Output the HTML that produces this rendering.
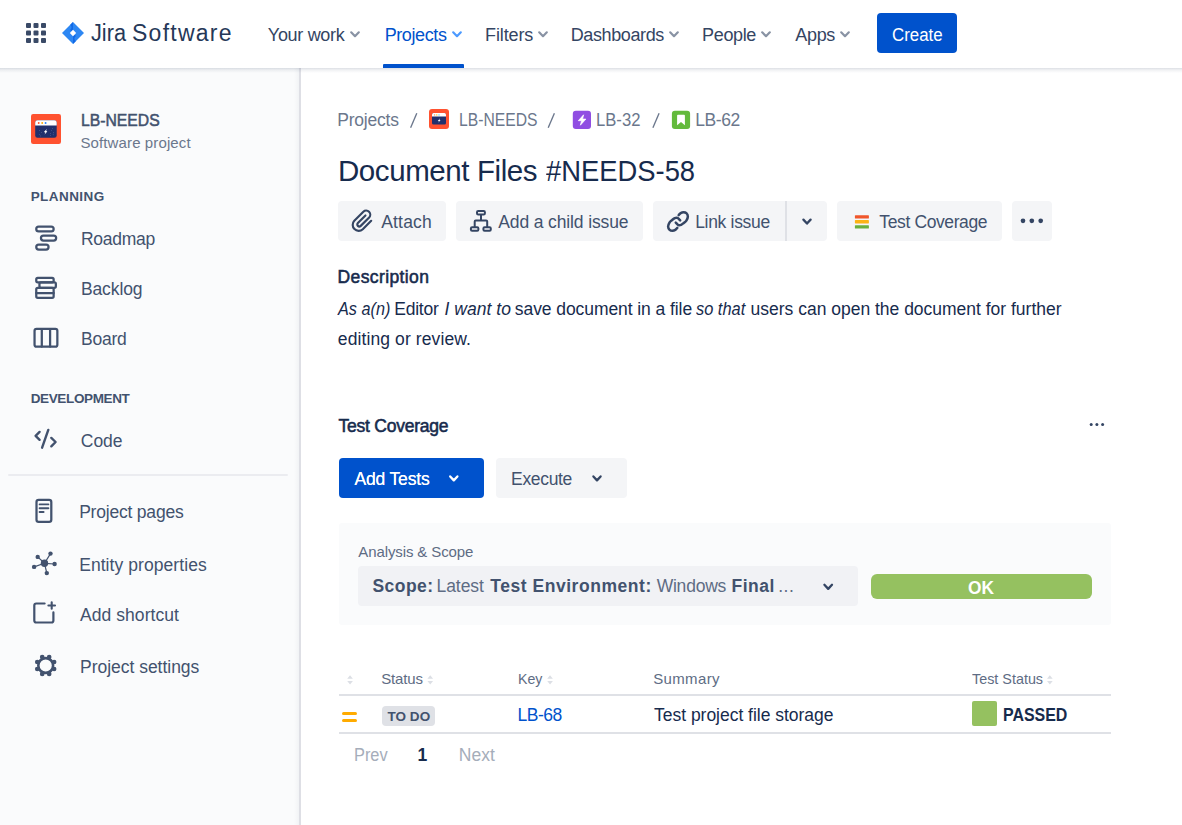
<!DOCTYPE html>
<html><head><meta charset="utf-8"><title>Document Files #NEEDS-58 - Jira</title>
<style>
html,body{margin:0;padding:0}
body{width:1182px;height:825px;overflow:hidden;background:#fff;font-family:"Liberation Sans", sans-serif;position:relative}
.t{position:absolute;white-space:nowrap;line-height:40px;height:40px}
.a{position:absolute}
svg{position:absolute;overflow:visible}
</style></head>
<body>
<!-- sidebar -->
<div class="a" style="left:0;top:68px;width:300px;height:757px;background:#FAFBFC"></div>
<div class="a" style="left:294px;top:68px;width:5px;height:757px;background:linear-gradient(to right,rgba(9,30,66,0),rgba(9,30,66,0.035))"></div>
<div class="a" style="left:299px;top:68px;width:2px;height:757px;background:#DEDFE5"></div>
<!-- top nav -->
<div class="a" style="left:0;top:68px;width:1182px;height:5px;background:linear-gradient(to bottom,rgba(9,30,66,0.14),rgba(9,30,66,0.06) 40%,rgba(9,30,66,0))"></div>
<div class="a" style="left:0;top:0;width:1182px;height:68px;background:#fff"></div>
<!-- app switcher -->
<svg style="left:26px;top:23px" width="20" height="20" viewBox="0 0 20 20" fill="#3A4A67">
<rect x="0" y="0" width="5" height="5" rx="1"/><rect x="7.5" y="0" width="5" height="5" rx="1"/><rect x="15" y="0" width="5" height="5" rx="1"/>
<rect x="0" y="7.5" width="5" height="5" rx="1"/><rect x="7.5" y="7.5" width="5" height="5" rx="1"/><rect x="15" y="7.5" width="5" height="5" rx="1"/>
<rect x="0" y="15" width="5" height="5" rx="1"/><rect x="7.5" y="15" width="5" height="5" rx="1"/><rect x="15" y="15" width="5" height="5" rx="1"/>
</svg>
<!-- jira logo -->
<svg style="left:62.2px;top:22px" width="22" height="22" viewBox="0 0 22 22">
<defs><linearGradient id="jg1" x1="0.2" y1="0" x2="0.6" y2="0.6"><stop offset="0" stop-color="#0A5FE0"/><stop offset="1" stop-color="#2684FF"/></linearGradient>
<linearGradient id="jg2" x1="0.8" y1="1" x2="0.4" y2="0.4"><stop offset="0" stop-color="#0A5FE0"/><stop offset="1" stop-color="#2684FF"/></linearGradient></defs>
<path d="M11 0 L22 11 L11 22 L0 11 Z" fill="#2D87F3"/>
<path d="M11 0 L8.2 2.8 C10 4.8 10 6.4 8 8 L11 11 L11 8 Z" fill="#0F66E4" opacity="0.9"/>
<path d="M11 22 L13.8 19.2 C12 17.2 12 15.6 14 14 L11 11 L11 14 Z" fill="#0F66E4" opacity="0.9"/>
<path d="M11 7.8 L14.2 11 L11 14.2 L7.8 11 Z" fill="#fff"/>
</svg>
<!-- nav chevrons -->
<svg style="left:350px;top:30.5px" width="10" height="7" viewBox="0 0 10 7" fill="none" stroke="#8993A4" stroke-width="2.2" stroke-linecap="round" stroke-linejoin="round"><path d="M1.2 1.3 L5 5.2 L8.8 1.3"/></svg>
<svg style="left:451.5px;top:30.5px" width="10" height="7" viewBox="0 0 10 7" fill="none" stroke="#4C9AFF" stroke-width="2.2" stroke-linecap="round" stroke-linejoin="round"><path d="M1.2 1.3 L5 5.2 L8.8 1.3"/></svg>
<svg style="left:538px;top:30.5px" width="10" height="7" viewBox="0 0 10 7" fill="none" stroke="#8993A4" stroke-width="2.2" stroke-linecap="round" stroke-linejoin="round"><path d="M1.2 1.3 L5 5.2 L8.8 1.3"/></svg>
<svg style="left:669px;top:30.5px" width="10" height="7" viewBox="0 0 10 7" fill="none" stroke="#8993A4" stroke-width="2.2" stroke-linecap="round" stroke-linejoin="round"><path d="M1.2 1.3 L5 5.2 L8.8 1.3"/></svg>
<svg style="left:761px;top:30.5px" width="10" height="7" viewBox="0 0 10 7" fill="none" stroke="#8993A4" stroke-width="2.2" stroke-linecap="round" stroke-linejoin="round"><path d="M1.2 1.3 L5 5.2 L8.8 1.3"/></svg>
<svg style="left:840px;top:30.5px" width="10" height="7" viewBox="0 0 10 7" fill="none" stroke="#8993A4" stroke-width="2.2" stroke-linecap="round" stroke-linejoin="round"><path d="M1.2 1.3 L5 5.2 L8.8 1.3"/></svg>
<!-- active underline -->
<div class="a" style="left:383px;top:64px;width:81px;height:4px;background:#0052CC;border-radius:1px 1px 0 0"></div>
<!-- create button -->
<div class="a" style="left:877px;top:13px;width:80px;height:40px;background:#0052CC;border-radius:4px"></div>
<!-- project avatar -->
<div class="a" style="left:31px;top:114px;width:30px;height:30px;background:#FF5230;border-radius:2.2px"></div>
<!-- sidebar divider -->
<div class="a" style="left:8px;top:474px;width:280px;height:2px;background:#EBECF0;border-radius:1px"></div>
<!-- action buttons -->
<div class="a" style="left:338px;top:201px;width:108px;height:40px;background:#F4F5F7;border-radius:4px"></div>
<div class="a" style="left:456px;top:201px;width:187px;height:40px;background:#F4F5F7;border-radius:4px"></div>
<div class="a" style="left:653px;top:201px;width:132.5px;height:40px;background:#F4F5F7;border-radius:4px 0 0 4px"></div>
<div class="a" style="left:785px;top:201px;width:2px;height:40px;background:#DFE1E6"></div>
<div class="a" style="left:787px;top:201px;width:39.5px;height:40px;background:#F4F5F7;border-radius:0 4px 4px 0"></div>
<div class="a" style="left:837px;top:201px;width:165px;height:40px;background:#F4F5F7;border-radius:4px"></div>
<div class="a" style="left:1012px;top:201px;width:40px;height:40px;background:#F4F5F7;border-radius:4px"></div>
<!-- Add Tests / Execute -->
<div class="a" style="left:339px;top:458px;width:145px;height:40px;background:#0052CC;border-radius:4px"></div>
<div class="a" style="left:496px;top:458px;width:131px;height:40px;background:#F4F5F7;border-radius:4px"></div>
<!-- panel -->
<div class="a" style="left:339px;top:523px;width:772px;height:102px;background:#FAFBFC;border-radius:3px"></div>
<div class="a" style="left:358px;top:566px;width:500px;height:40px;background:#F1F2F5;border-radius:4px"></div>
<div class="a" style="left:871px;top:574px;width:221px;height:25px;background:#95C160;border-radius:6px"></div>
<!-- table lines -->
<div class="a" style="left:339px;top:694px;width:772px;height:2px;background:#DFE1E6"></div>
<div class="a" style="left:339px;top:732px;width:772px;height:2px;background:#DFE1E6"></div>
<!-- todo lozenge -->
<div class="a" style="left:382px;top:706px;width:53px;height:20px;background:#DFE1E6;border-radius:4px"></div>
<!-- passed square -->
<div class="a" style="left:972px;top:701px;width:25px;height:25px;background:#95C160;border-radius:2px"></div>
<!-- priority medium -->
<div class="a" style="left:341.5px;top:712.3px;width:15px;height:3.1px;background:#FFAB00;border-radius:1.5px"></div>
<div class="a" style="left:341.5px;top:718.8px;width:15px;height:3.1px;background:#FFAB00;border-radius:1.5px"></div>
<svg style="left:0;top:0" width="1182" height="825" viewBox="0 0 1182 825">
<g fill="none" stroke="#42526E" stroke-width="2.25" stroke-linecap="round" stroke-linejoin="round">
<rect x="36.25" y="226.55" width="17.40" height="4.90" rx="2.45"/>
<rect x="40.95" y="235.55" width="15.20" height="5.00" rx="2.50"/>
<rect x="36.25" y="244.55" width="12.30" height="5.00" rx="2.50"/>
<rect x="36.25" y="277.95" width="17.40" height="4.40" rx="1.50"/>
<rect x="39.45" y="282.35" width="16.40" height="5.50" rx="1.50"/>
<rect x="36.25" y="287.85" width="17.40" height="10.00" rx="1.50"/>
<path d="M36.2 293.1 H53.7"/>
<rect x="34.55" y="328.75" width="22.80" height="17.90" rx="2.00"/>
<path d="M41.8 329 V346.6 M50.1 329 V346.6"/>
<rect x="36.50" y="499.80" width="14.80" height="22.10" rx="2.20"/>
<path d="M39.6 504.4 H48.4 M39.6 508.2 H48.4 M39.6 512 H43.6" stroke-width="1.9"/>
<path d="M44.6 603.5 H36.3 a2 2 0 0 0 -2 2 V620.5 a2 2 0 0 0 2 2 H51.4 a2 2 0 0 0 2 -2 V612.4" stroke-width="2.2"/>
<path d="M51.7 602.2 V608.8 M48.4 605.5 H55" stroke-width="2.1"/>
</g>
<g fill="none" stroke="#42526E" stroke-width="2.4" stroke-linecap="round" stroke-linejoin="round">
<path d="M39.6 431.9 L35.6 435.8 L39.6 439.8 M48.3 429.9 L42.1 447.7 M51.3 437.9 L55.6 442 L51.3 446.3"/>
</g>
<g fill="#42526E" stroke="#42526E" stroke-width="1.2">
<path d="M44.5 563.3 L37.7 556.9"/>
<path d="M44.5 563.3 L50.5 553.6"/>
<path d="M44.5 563.3 L54.6 564.0"/>
<path d="M44.5 563.3 L46.8 573.1"/>
<path d="M44.5 563.3 L34.1 566.9"/>
<circle cx="44.5" cy="563.3" r="3.7" stroke="none"/>
<circle cx="37.7" cy="556.9" r="2.2" stroke="none"/>
<circle cx="50.5" cy="553.6" r="2.2" stroke="none"/>
<circle cx="54.6" cy="564.0" r="2.2" stroke="none"/>
<circle cx="46.8" cy="573.1" r="2.2" stroke="none"/>
<circle cx="34.1" cy="566.9" r="2.2" stroke="none"/>
</g>
<g fill="#42526E">
<circle cx="45.7" cy="665.5" r="7.4" fill="none" stroke="#42526E" stroke-width="2.6"/>
<circle cx="54.11" cy="668.98" r="2.35"/>
<circle cx="49.18" cy="673.91" r="2.35"/>
<circle cx="42.22" cy="673.91" r="2.35"/>
<circle cx="37.29" cy="668.98" r="2.35"/>
<circle cx="37.29" cy="662.02" r="2.35"/>
<circle cx="42.22" cy="657.09" r="2.35"/>
<circle cx="49.18" cy="657.09" r="2.35"/>
<circle cx="54.11" cy="662.02" r="2.35"/>
</g>
<path d="M371.20 220.79 L362.78 229.20 A6 6 0 0 1 354.30 220.72 L363.35 211.67 A4.1 4.1 0 0 1 369.15 217.46 L360.73 225.88 A2 2 0 0 1 357.90 223.05 L365.47 215.48" fill="none" stroke="#344563" stroke-width="2.15" stroke-linecap="round" stroke-linejoin="round"/>
<g fill="none" stroke="#344563" stroke-width="2" stroke-linecap="round" stroke-linejoin="round">
<rect x="477.00" y="211.10" width="7.90" height="3.30" rx="1.20"/>
<rect x="470.90" y="227.30" width="7.50" height="3.50" rx="1.20"/>
<rect x="483.40" y="227.30" width="7.40" height="3.50" rx="1.20"/>
<path d="M481 215 V220.4 M474.7 226.4 V221.4 a1 1 0 0 1 1 -1 H486.2 a1 1 0 0 1 1 1 V226.4"/>
</g>
<g fill="none" stroke="#344563" stroke-width="2.5" stroke-linecap="round" stroke-linejoin="round">
<path d="M677.30 227.90 C676.97 228.23 676.10 229.42 675.30 229.90 C674.50 230.38 673.45 230.82 672.50 230.80 C671.55 230.78 670.33 230.50 669.60 229.80 C668.87 229.10 668.10 227.83 668.10 226.60 C668.10 225.37 668.92 223.50 669.60 222.40 C670.28 221.30 671.33 220.72 672.20 220.00 C673.07 219.28 673.92 218.45 674.80 218.10 C675.68 217.75 676.60 217.52 677.50 217.90 C678.40 218.28 679.75 219.98 680.20 220.40"/>
<path d="M677.30 227.90 C676.97 228.23 676.10 229.42 675.30 229.90 C674.50 230.38 673.45 230.82 672.50 230.80 C671.55 230.78 670.33 230.50 669.60 229.80 C668.87 229.10 668.10 227.83 668.10 226.60 C668.10 225.37 668.92 223.50 669.60 222.40 C670.28 221.30 671.33 220.72 672.20 220.00 C673.07 219.28 673.92 218.45 674.80 218.10 C675.68 217.75 676.60 217.52 677.50 217.90 C678.40 218.28 679.75 219.98 680.20 220.40" transform="rotate(180 677.98 221.49)"/>
</g>
<path d="M803.40 219.65 L807.00 223.55 L810.60 219.65" fill="none" stroke="#344563" stroke-width="2.3" stroke-linecap="round" stroke-linejoin="round"/>
<path d="M450.20 476.45 L453.80 480.35 L457.40 476.45" fill="none" stroke="#FFFFFF" stroke-width="2.3" stroke-linecap="round" stroke-linejoin="round"/>
<path d="M593.40 476.45 L597.00 480.35 L600.60 476.45" fill="none" stroke="#344563" stroke-width="2.3" stroke-linecap="round" stroke-linejoin="round"/>
<path d="M824.40 584.75 L828.20 588.85 L832.00 584.75" fill="none" stroke="#344563" stroke-width="2.3" stroke-linecap="round" stroke-linejoin="round"/>
<rect x="854.9" y="215.2" width="14" height="3.3" rx="0.6" fill="#F0562B"/>
<rect x="854.9" y="220.1" width="14" height="3.3" rx="0.6" fill="#FBB315"/>
<rect x="854.9" y="225.2" width="14" height="3.3" rx="0.6" fill="#6AAF3D"/>
<circle cx="1023.0" cy="220.8" r="2.35" fill="#344563"/>
<circle cx="1031.8" cy="220.8" r="2.35" fill="#344563"/>
<circle cx="1040.7" cy="220.8" r="2.35" fill="#344563"/>
<circle cx="1091.2" cy="424.6" r="1.5" fill="#344563"/>
<circle cx="1096.9" cy="424.6" r="1.5" fill="#344563"/>
<circle cx="1102.6" cy="424.6" r="1.5" fill="#344563"/>
<rect x="429" y="109" width="20" height="20" rx="3" fill="#FF5230"/>
<rect x="432" y="113" width="14" height="11.4" rx="1.5" fill="#21306C"/>
<path d="M432 116.5 V114.5 a1.5 1.5 0 0 1 1.5 -1.5 H444.5 a1.5 1.5 0 0 1 1.5 1.5 V116.5 Z" fill="#fff"/>
<circle cx="434.6" cy="114.9" r="0.7" fill="#FF8B5C"/><circle cx="436.8" cy="114.9" r="0.7" fill="#FFC400"/><circle cx="439" cy="114.9" r="0.7" fill="#4FC3F7"/>
<path d="M440 118.3 L437.8 121 L439 121 L438.2 122.8 L440.6 120 L439.4 120 Z" fill="#fff"/>
<rect x="572.8" y="110.8" width="18.2" height="18.2" rx="3" fill="#904EE2"/>
<path d="M583.6 114.8 L578.3 120.7 L581.5 120.7 L580.4 125.2 L585.9 119.1 L582.6 119.1 Z" fill="#fff" stroke="#fff" stroke-width="0.7" stroke-linejoin="round"/>
<rect x="671.9" y="110.8" width="18.2" height="18.2" rx="3" fill="#63BA3C"/>
<path d="M677.1 115.6 a0.9 0.9 0 0 1 0.9 -0.9 H684.0 a0.9 0.9 0 0 1 0.9 0.9 V125.2 L681 122.0 L677.1 125.2 Z" fill="#fff"/>
<rect x="35.2" y="120.2" width="21.5" height="17.5" rx="2.3" fill="#21306C"/>
<path d="M35.2 125.6 V122.5 a2.3 2.3 0 0 1 2.3 -2.3 H54.4 a2.3 2.3 0 0 1 2.3 2.3 V125.6 Z" fill="#fff"/>
<circle cx="38.7" cy="123" r="0.95" fill="#FF5230"/><circle cx="42.2" cy="123" r="0.95" fill="#FFAB00"/><circle cx="45.6" cy="123" r="0.95" fill="#2684FF"/>
<path d="M46.9 129 L43.9 132 L45.4 132.4 L44.6 134.4 L47.3 131.4 L46.1 131 Z" fill="#fff"/>
<circle cx="39.5" cy="130.5" r="0.45" fill="#8C98C4" opacity="0.7"/>
<circle cx="41.5" cy="132.6" r="0.45" fill="#8C98C4" opacity="0.7"/>
<circle cx="39.3" cy="134.6" r="0.45" fill="#8C98C4" opacity="0.7"/>
<circle cx="52.4" cy="128.6" r="0.45" fill="#8C98C4" opacity="0.7"/>
<circle cx="51.5" cy="130.6" r="0.45" fill="#8C98C4" opacity="0.7"/>
<circle cx="53.4" cy="132.8" r="0.45" fill="#8C98C4" opacity="0.7"/>
<circle cx="50.4" cy="133.4" r="0.45" fill="#8C98C4" opacity="0.7"/>
<circle cx="53.2" cy="134.8" r="0.45" fill="#8C98C4" opacity="0.7"/>
<circle cx="50.6" cy="135.6" r="0.45" fill="#8C98C4" opacity="0.7"/>
<circle cx="40.6" cy="135.9" r="0.45" fill="#8C98C4" opacity="0.7"/>
<path d="M410.6 127.8 L416.8 113.2" stroke="#6B778C" stroke-width="1.35" fill="none"/>
<path d="M548.2 127.8 L554.4 113.2" stroke="#6B778C" stroke-width="1.35" fill="none"/>
<path d="M652.9 127.8 L659.1 113.2" stroke="#6B778C" stroke-width="1.35" fill="none"/>
<path d="M347.2 678.7 l2.85 -3.5 l2.85 3.5 Z M347.2 680.9 l2.85 3.5 l2.85 -3.5 Z" fill="#DCDFE5"/>
<path d="M427.4 678.7 l2.85 -3.5 l2.85 3.5 Z M427.4 680.9 l2.85 3.5 l2.85 -3.5 Z" fill="#DCDFE5"/>
<path d="M547.2 678.7 l2.85 -3.5 l2.85 3.5 Z M547.2 680.9 l2.85 3.5 l2.85 -3.5 Z" fill="#DCDFE5"/>
<path d="M1047.0 678.7 l2.85 -3.5 l2.85 3.5 Z M1047.0 680.9 l2.85 3.5 l2.85 -3.5 Z" fill="#DCDFE5"/>
</svg>
<div id="logo1" class="t" style="left:91.20px;top:13.00px;font-size:23px;font-weight:400;color:#253858;transform:scaleX(0.9444);transform-origin:0 50%;">Jira</div>
<div id="logo2" class="t" style="left:132.04px;top:13.00px;font-size:23px;font-weight:400;color:#253858;letter-spacing:1.243px;">Software</div>
<div id="n1" class="t" style="left:267.86px;top:15.00px;font-size:18px;font-weight:400;color:#344563;letter-spacing:-0.309px;">Your work</div>
<div id="n2" class="t" style="left:384.68px;top:15.00px;font-size:18px;font-weight:400;color:#0052CC;letter-spacing:-0.402px;">Projects</div>
<div id="n3" class="t" style="left:485.11px;top:15.00px;font-size:18px;font-weight:400;color:#344563;letter-spacing:-0.126px;">Filters</div>
<div id="n4" class="t" style="left:570.70px;top:15.00px;font-size:18px;font-weight:400;color:#344563;letter-spacing:-0.379px;">Dashboards</div>
<div id="n5" class="t" style="left:702.10px;top:15.00px;font-size:18px;font-weight:400;color:#344563;letter-spacing:-0.355px;">People</div>
<div id="n6" class="t" style="left:795.28px;top:15.00px;font-size:18px;font-weight:400;color:#344563;letter-spacing:-0.310px;">Apps</div>
<div id="create" class="t" style="left:892.15px;top:15.00px;font-size:18px;font-weight:400;color:#FFFFFF;transform:scaleX(0.9377);transform-origin:0 50%;">Create</div>
<div id="pj" class="t" style="left:80.58px;top:100.00px;font-size:17.3px;font-weight:400;color:#42526E;-webkit-text-stroke:0.55px #42526E;transform:scaleX(0.9100);transform-origin:0 50%;">LB-NEEDS</div>
<div id="pjs" class="t" style="left:80.47px;top:123.00px;font-size:15px;font-weight:400;color:#6B778C;letter-spacing:0.116px;">Software project</div>
<div id="h1" class="t" style="left:30.68px;top:177.00px;font-size:13.5px;font-weight:700;color:#42526E;letter-spacing:0.435px;">PLANNING</div>
<div id="s1" class="t" style="left:80.91px;top:219.00px;font-size:17.5px;font-weight:400;color:#42526E;letter-spacing:-0.269px;">Roadmap</div>
<div id="s2" class="t" style="left:80.93px;top:269.00px;font-size:17.5px;font-weight:400;color:#42526E;letter-spacing:-0.102px;">Backlog</div>
<div id="s3" class="t" style="left:80.98px;top:319.00px;font-size:17.5px;font-weight:400;color:#42526E;letter-spacing:-0.223px;">Board</div>
<div id="h2" class="t" style="left:30.69px;top:379.00px;font-size:13.5px;font-weight:700;color:#42526E;letter-spacing:-0.363px;">DEVELOPMENT</div>
<div id="s4" class="t" style="left:80.78px;top:421.00px;font-size:17.5px;font-weight:400;color:#42526E;letter-spacing:-0.013px;">Code</div>
<div id="s5" class="t" style="left:79.15px;top:492.00px;font-size:17.5px;font-weight:400;color:#42526E;letter-spacing:-0.204px;">Project pages</div>
<div id="s6" class="t" style="left:79.15px;top:545.00px;font-size:17.5px;font-weight:400;color:#42526E;letter-spacing:0.069px;">Entity properties</div>
<div id="s7" class="t" style="left:80.00px;top:595.00px;font-size:17.5px;font-weight:400;color:#42526E;letter-spacing:0.064px;">Add shortcut</div>
<div id="s8" class="t" style="left:80.02px;top:647.00px;font-size:17.5px;font-weight:400;color:#42526E;letter-spacing:-0.024px;">Project settings</div>
<div id="b1" class="t" style="left:337.25px;top:100.00px;font-size:17.5px;font-weight:400;color:#6B778C;letter-spacing:-0.218px;">Projects</div>
<div id="b2" class="t" style="left:458.98px;top:100.00px;font-size:17.5px;font-weight:400;color:#6B778C;transform:scaleX(0.8974);transform-origin:0 50%;">LB-NEEDS</div>
<div id="b3" class="t" style="left:596.02px;top:100.00px;font-size:17.5px;font-weight:400;color:#6B778C;transform:scaleX(0.9515);transform-origin:0 50%;">LB-32</div>
<div id="b4" class="t" style="left:695.15px;top:100.00px;font-size:17.5px;font-weight:400;color:#6B778C;letter-spacing:-0.375px;">LB-62</div>
<div id="title1" class="t" style="left:337.92px;top:151.00px;font-size:29.5px;font-weight:400;color:#172B4D;letter-spacing:-0.401px;">Document Files</div>
<div id="title2" class="t" style="left:545.71px;top:151.00px;font-size:29.5px;font-weight:400;color:#172B4D;transform:scaleX(0.9279);transform-origin:0 50%;">#NEEDS-58</div>
<div id="bt1" class="t" style="left:381.19px;top:202.00px;font-size:17.5px;font-weight:400;color:#42526E;letter-spacing:0.197px;">Attach</div>
<div id="bt2" class="t" style="left:498.28px;top:202.00px;font-size:17.5px;font-weight:400;color:#42526E;letter-spacing:-0.129px;">Add a child issue</div>
<div id="bt3" class="t" style="left:695.15px;top:202.00px;font-size:17.5px;font-weight:400;color:#42526E;letter-spacing:-0.306px;">Link issue</div>
<div id="bt4" class="t" style="left:879.37px;top:202.00px;font-size:17.5px;font-weight:400;color:#42526E;letter-spacing:-0.388px;">Test Coverage</div>
<div id="dh" class="t" style="left:337.54px;top:257.00px;font-size:17.5px;font-weight:400;color:#172B4D;letter-spacing:0.384px;-webkit-text-stroke:0.55px #172B4D;">Description</div>
<div id="d1a" class="t" style="left:338.05px;top:289.00px;font-size:17.5px;font-weight:400;color:#172B4D;transform:scaleX(0.9273);transform-origin:0 50%;"><i>As a(n)</i></div>
<div id="d1b" class="t" style="left:394.25px;top:289.00px;font-size:17.5px;font-weight:400;color:#172B4D;letter-spacing:-0.223px;">Editor</div>
<div id="d1c" class="t" style="left:444.49px;top:289.00px;font-size:17.5px;font-weight:400;color:#172B4D;letter-spacing:0.035px;"><i>I want to</i></div>
<div id="d1d" class="t" style="left:514.85px;top:289.00px;font-size:17.5px;font-weight:400;color:#172B4D;letter-spacing:-0.078px;">save document in a file</div>
<div id="d1e" class="t" style="left:696.03px;top:289.00px;font-size:17.5px;font-weight:400;color:#172B4D;transform:scaleX(0.9366);transform-origin:0 50%;"><i>so that</i></div>
<div id="d1f" class="t" style="left:750.61px;top:289.00px;font-size:17.5px;font-weight:400;color:#172B4D;letter-spacing:-0.010px;">users can open the document for further</div>
<div id="d2" class="t" style="left:337.81px;top:319.00px;font-size:17.5px;font-weight:400;color:#172B4D;letter-spacing:0.105px;">editing or review.</div>
<div id="tc" class="t" style="left:338.62px;top:406.00px;font-size:17.5px;font-weight:400;color:#172B4D;letter-spacing:-0.253px;-webkit-text-stroke:0.55px #172B4D;">Test Coverage</div>
<div id="at" class="t" style="left:354.51px;top:459.00px;font-size:17.5px;font-weight:400;color:#FFFFFF;letter-spacing:-0.167px;text-shadow:0 0 0.4px #fff;">Add Tests</div>
<div id="ex" class="t" style="left:511.07px;top:459.00px;font-size:17.5px;font-weight:400;color:#42526E;letter-spacing:-0.334px;">Execute</div>
<div id="as" class="t" style="left:358.30px;top:532.00px;font-size:15px;font-weight:400;color:#5E6C84;letter-spacing:-0.108px;">Analysis &amp; Scope</div>
<div id="sel1" class="t" style="left:372.53px;top:566.00px;font-size:17.5px;font-weight:700;color:#42526E;letter-spacing:0.425px;">Scope:</div>
<div id="sel2" class="t" style="left:436.45px;top:566.00px;font-size:17.5px;font-weight:400;color:#5E6C84;letter-spacing:-0.034px;">Latest</div>
<div id="sel3" class="t" style="left:490.19px;top:566.00px;font-size:17.5px;font-weight:700;color:#42526E;letter-spacing:0.548px;">Test Environment:</div>
<div id="sel4" class="t" style="left:656.66px;top:566.00px;font-size:17.5px;font-weight:400;color:#5E6C84;letter-spacing:-0.222px;">Windows</div>
<div id="sel5" class="t" style="left:731.58px;top:566.00px;font-size:17.5px;font-weight:700;color:#42526E;letter-spacing:0.463px;">Final</div>
<div id="sel6" class="t" style="left:778.17px;top:566.00px;font-size:17.5px;font-weight:400;color:#5E6C84;letter-spacing:0.590px;">...</div>
<div id="ok" class="t" style="left:968.10px;top:568.00px;font-size:18px;font-weight:700;color:#FFFFFF;transform:scaleX(0.9628);transform-origin:0 50%;">OK</div>
<div id="th1" class="t" style="left:381.14px;top:659.00px;font-size:15px;font-weight:400;color:#5E6C84;letter-spacing:-0.115px;">Status</div>
<div id="th2" class="t" style="left:517.71px;top:659.00px;font-size:15px;font-weight:400;color:#5E6C84;transform:scaleX(0.9430);transform-origin:0 50%;">Key</div>
<div id="th3" class="t" style="left:653.28px;top:659.00px;font-size:15px;font-weight:400;color:#5E6C84;letter-spacing:0.338px;">Summary</div>
<div id="th4" class="t" style="left:972.01px;top:659.00px;font-size:15px;font-weight:400;color:#5E6C84;transform:scaleX(0.9575);transform-origin:0 50%;">Test Status</div>
<div id="todo" class="t" style="left:387.39px;top:697.00px;font-size:13.5px;font-weight:700;color:#42526E;letter-spacing:0.062px;">TO DO</div>
<div id="key" class="t" style="left:517.39px;top:695.00px;font-size:17.5px;font-weight:400;color:#0052CC;letter-spacing:-0.434px;">LB-68</div>
<div id="sum" class="t" style="left:654.02px;top:695.00px;font-size:17.5px;font-weight:400;color:#172B4D;letter-spacing:-0.019px;">Test project file storage</div>
<div id="pass" class="t" style="left:1002.85px;top:695.00px;font-size:17.5px;font-weight:700;color:#172B4D;transform:scaleX(0.9109);transform-origin:0 50%;">PASSED</div>
<div id="pg1" class="t" style="left:353.72px;top:735.00px;font-size:17.5px;font-weight:400;color:#A5ADBA;transform:scaleX(0.9355);transform-origin:0 50%;">Prev</div>
<div id="pg2" class="t" style="left:417.57px;top:735.00px;font-size:17.5px;font-weight:700;color:#172B4D;font-family:"Liberation Mono",monospace;">1</div>
<div id="pg3" class="t" style="left:458.81px;top:735.00px;font-size:17.5px;font-weight:400;color:#A5ADBA;letter-spacing:0.018px;">Next</div>
</body></html>
